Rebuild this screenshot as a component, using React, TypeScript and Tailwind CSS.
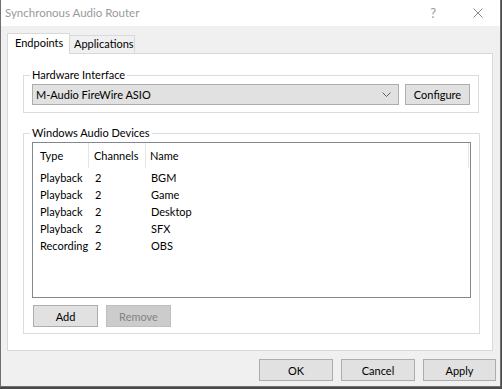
import React from 'react';

const rows = [
  { type: 'Playback', ch: '2', name: 'BGM' },
  { type: 'Playback', ch: '2', name: 'Game' },
  { type: 'Playback', ch: '2', name: 'Desktop' },
  { type: 'Playback', ch: '2', name: 'SFX' },
  { type: 'Recording', ch: '2', name: 'OBS' },
];

const Btn = ({ label, disabled, className = '' }: { label: string; disabled?: boolean; className?: string }) => (
  <button
    className={
      'h-[22px] border flex items-center justify-center leading-none ' +
      (disabled
        ? 'bg-[#cccccc] border-[#bfbfbf] text-[#838383] '
        : 'bg-[#e1e1e1] border-[#adadad] text-black ') +
      className
    }
  >
    {label}
  </button>
);

export default function App() {
  return (
    <div className="w-[502px] h-[389px] bg-[#4a4a4a] font-['Lato','Noto_Sans',sans-serif] text-[11px] text-black">
      <div className="w-[501px] h-[387px] flex flex-col border-l border-r border-b border-[#6f6f6f] bg-[#f0f0f0]">
        {/* title bar */}
        <div className="h-[26px] bg-white flex items-center shrink-0">
          <span className="pl-[4px] text-[#9a9a9a] text-[11.5px] leading-none">Synchronous Audio Router</span>
          <span className="ml-auto mr-[37px] text-[#9a9a9a] text-[13px] leading-none">?</span>
          <svg width="10" height="10" viewBox="0 0 10 10" className="mr-[17px]">
            <path d="M0.5 0.5 L9.5 9.5 M9.5 0.5 L0.5 9.5" stroke="#8a8a8a" strokeWidth="1" fill="none" />
          </svg>
        </div>

        {/* body */}
        <div className="flex-1 flex flex-col pt-[7px] pl-[6px]">
          <div className="flex items-end">
            <div className="relative z-10 -mb-px h-[21px] w-[63px] bg-white border border-b-0 border-[#d9d9d9] pl-[7px] pt-[1px] leading-[16px]">
              Endpoints
            </div>
            <div className="-ml-px h-[18px] w-[66px] bg-[#f0f0f0] border border-b-0 border-[#d9d9d9] pl-[4px] leading-[16px]">
              Applications
            </div>
          </div>

          <div className="w-[486px] h-[298px] bg-white border border-[#d9d9d9] pl-[15px] pt-[13px]">
            <fieldset className="w-[456px] border border-[#dcdcdc] px-[8px] pb-[7px] pt-px">
              <legend className="-ml-[2px] px-[2px] leading-[16px]">Hardware Interface</legend>
              <div className="flex gap-[6px]">
                <div className="w-[367px] h-[21px] bg-[#e1e1e1] border border-[#adadad] flex items-center pl-[3px]">
                  <span className="leading-none">M-Audio FireWire ASIO</span>
                  <svg width="9" height="5" viewBox="0 0 9 5" className="ml-auto mr-[7px]">
                    <path d="M0.5 0.5 L4.5 4.5 L8.5 0.5" stroke="#606060" strokeWidth="1" fill="none" />
                  </svg>
                </div>
                <Btn label="Configure" className="w-[65px] !h-[21px]" />
              </div>
            </fieldset>

            <fieldset className="mt-[12px] w-[456px] h-[209px] border border-[#dcdcdc] px-[8px] pt-[1px]">
              <legend className="-ml-[2px] px-[2px] leading-[16px]">Windows Audio Devices</legend>
              <div className="w-[439px] h-[156px] border border-[#828790] bg-white">
                <div className="flex h-[25px] items-center">
                  <div className="w-[56px] h-full flex items-center pt-[2px] pl-[7px] border-r border-[#e5e5e5]">Type</div>
                  <div className="w-[57px] h-full flex items-center pt-[2px] pl-[5px] border-r border-[#e5e5e5]">Channels</div>
                  <div className="flex-1 h-full flex items-center pt-[2px] pl-[4px] border-r border-[#e5e5e5] mr-[1px]">Name</div>
                </div>
                <div className="pt-[2px]">
                  {rows.map((r, i) => (
                    <div key={i} className="flex h-[17px] items-center">
                      <div className="w-[56px] pl-[7px] whitespace-nowrap">{r.type}</div>
                      <div className="w-[57px] pl-[6px]">{r.ch}</div>
                      <div className="flex-1 pl-[5px]">{r.name}</div>
                    </div>
                  ))}
                </div>
              </div>
              <div className="flex gap-[8px] mt-[7px] pl-px">
                <Btn label="Add" className="w-[65px]" />
                <Btn label="Remove" disabled className="w-[65px]" />
              </div>
            </fieldset>
          </div>

          <div className="flex gap-[8px] mt-[8px] ml-[252px]">
            <Btn label="OK" className="w-[74px]" />
            <Btn label="Cancel" className="w-[74px]" />
            <Btn label="Apply" className="w-[73px]" />
          </div>
        </div>
      </div>
    </div>
  );
}
